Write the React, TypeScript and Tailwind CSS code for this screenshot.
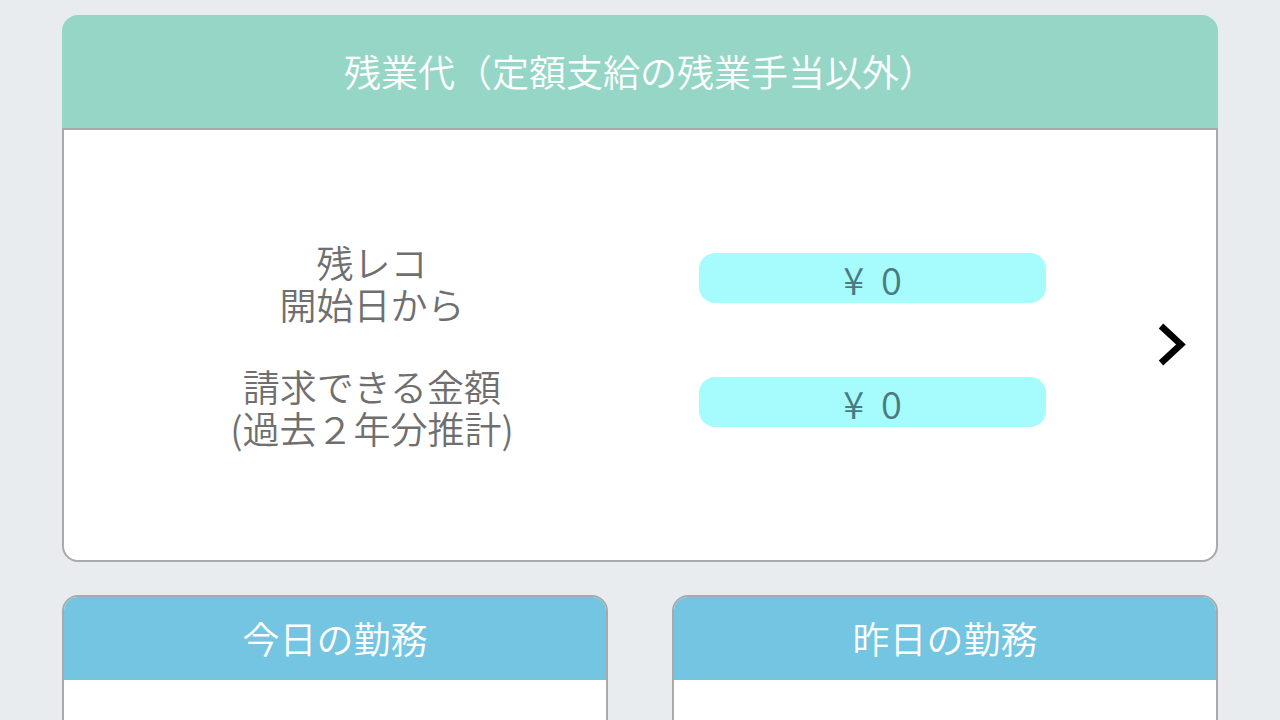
const font = { fontFamily: '"Noto Sans CJK JP", "Noto Sans", sans-serif' };

const ChevronRight = () => (
  <svg width={30} height={46} viewBox="0 0 30 46" fill="none" stroke="#000" strokeWidth={6.5}>
    <polyline points="4,4 24,22.5 4,41" strokeLinejoin="miter" strokeLinecap="butt" />
  </svg>
);

function AmountRow({ lines, amount }: { lines: string[]; amount: string }) {
  return (
    <div className="flex items-center">
      <div className="w-[616px] text-center text-[37px] leading-[42px] font-[350] text-[#6f6f6f]">
        {lines.map((line) => (
          <div key={line}>{line}</div>
        ))}
      </div>
      <div className="ml-[19px] mb-[10px] flex h-[50px] w-[347px] items-center justify-center gap-[17px] rounded-2xl bg-[#a6fcfd] text-[38px] font-[350] text-[#4b7b82]">
        <span>¥</span>
        <span>{amount}</span>
      </div>
    </div>
  );
}

function WorkCard({ title }: { title: string }) {
  return (
    <div className="overflow-hidden rounded-2xl border-2 border-[#a9a9a9] bg-white">
      <div className="flex h-[83px] items-center justify-center bg-[#74c5e2] text-[37px] font-[350] text-white">
        {title}
      </div>
      <div className="h-[200px]" />
    </div>
  );
}

export default function App() {
  return (
    <div className="min-h-screen bg-[#e9ecef] px-[62px] pt-[15px]" style={font}>
      {/* ── Overtime card ─────────────────────────────────────────── */}
      <div>
        <div className="flex h-[113px] items-center justify-center rounded-t-2xl bg-[#96d6c6] text-[37px] font-[350] text-white">
          残業代（定額支給の残業手当以外）
        </div>
        <div className="flex h-[434px] items-center rounded-b-2xl border-2 border-[#a9a9a9] bg-white">
          <div className="flex flex-col gap-[40px]">
            <AmountRow lines={['残レコ', '開始日から']} amount="0" />
            <AmountRow lines={['請求できる金額', '(過去２年分推計)']} amount="0" />
          </div>
          <div className="ml-[111px]">
            <ChevronRight />
          </div>
        </div>
      </div>

      {/* ── Work cards ────────────────────────────────────────────── */}
      <div className="mt-[33px] grid grid-cols-2 gap-[64px]">
        <WorkCard title="今日の勤務" />
        <WorkCard title="昨日の勤務" />
      </div>
    </div>
  );
}
